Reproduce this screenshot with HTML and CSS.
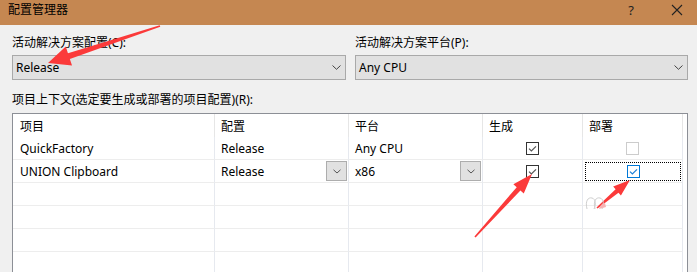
FILE: index.html
```html
<!DOCTYPE html>
<html lang="zh-CN">
<head>
<meta charset="utf-8">
<title>配置管理器</title>
<link rel="stylesheet" href="styles.css">
</head>
<body>
<div class="titlebar">
  <span class="title">配置管理器</span>
  <div class="tb-btns">
    <span class="help">?</span>
    <svg class="close" width="12" height="12" viewBox="0 0 12 12"><path d="M1 1 L11 11 M11 1 L1 11" stroke="#222" stroke-width="1.1" fill="none"/></svg>
  </div>
</div>
<div class="content">
  <div class="selectors">
    <div class="field">
      <div class="label">活动解决方案配置(C):</div>
      <div class="combo"><span>Release</span><svg class="chev" width="9" height="5" viewBox="0 0 9 5"><path d="M0.5 0.5 L4.5 4.3 L8.5 0.5" stroke="#444" stroke-width="1" fill="none"/></svg></div>
    </div>
    <div class="field">
      <div class="label">活动解决方案平台(P):</div>
      <div class="combo"><span>Any CPU</span><svg class="chev" width="9" height="5" viewBox="0 0 9 5"><path d="M0.5 0.5 L4.5 4.3 L8.5 0.5" stroke="#444" stroke-width="1" fill="none"/></svg></div>
    </div>
  </div>
  <div class="label ctx">项目上下文(选定要生成或部署的项目配置)(R):</div>
  <div class="grid">
    <div class="hc first">项目</div>
    <div class="hc">配置</div>
    <div class="hc">平台</div>
    <div class="hc">生成</div>
    <div class="hc">部署</div>
    <div class="hc end"></div>

    <div class="c first">QuickFactory</div>
    <div class="c">Release</div>
    <div class="c">Any CPU</div>
    <div class="c center"><svg class="cb" width="13" height="13" viewBox="0 0 13 13"><rect x="0.5" y="0.5" width="12" height="12" fill="#fff" stroke="#333"/><path d="M3 6.6 L5.4 9 L10 4.3" stroke="#555" stroke-width="1.2" fill="none"/></svg></div>
    <div class="c center"><svg class="cb" width="13" height="13" viewBox="0 0 13 13"><rect x="0.5" y="0.5" width="12" height="12" fill="#fff" stroke="#cccccc"/></svg></div>
    <div class="c end"></div>

    <div class="c first">UNION Clipboard</div>
    <div class="c combo-cell">Release<span class="cbtn"><svg width="8" height="5" viewBox="0 0 8 5"><path d="M0.5 0.8 L4 4 L7.5 0.8" stroke="#555" stroke-width="1" fill="none"/></svg></span></div>
    <div class="c combo-cell">x86<span class="cbtn"><svg width="8" height="5" viewBox="0 0 8 5"><path d="M0.5 0.8 L4 4 L7.5 0.8" stroke="#555" stroke-width="1" fill="none"/></svg></span></div>
    <div class="c center"><svg class="cb" width="13" height="13" viewBox="0 0 13 13"><rect x="0.5" y="0.5" width="12" height="12" fill="#fff" stroke="#333"/><path d="M3 6.6 L5.4 9 L10 4.3" stroke="#555" stroke-width="1.2" fill="none"/></svg></div>
    <div class="c center focus-cell"><span class="focus"><svg class="cb" width="13" height="13" viewBox="0 0 13 13"><rect x="0.5" y="0.5" width="12" height="12" fill="#fff" stroke="#0078d7"/><path d="M3 6.6 L5.4 9 L10 4.3" stroke="#1a7fd8" stroke-width="1.2" fill="none"/></svg></span></div>
    <div class="c end"></div>

    <div class="c first"></div><div class="c"></div><div class="c"></div><div class="c"></div><div class="c"></div><div class="c end"></div>
    <div class="c first"></div><div class="c"></div><div class="c"></div><div class="c"></div><div class="c"></div><div class="c end"></div>
    <div class="c first"></div><div class="c"></div><div class="c"></div><div class="c"></div><div class="c"></div><div class="c end"></div>
    <div class="c first"></div><div class="c"></div><div class="c"></div><div class="c"></div><div class="c"></div><div class="c end"></div>
    <div class="c first"></div><div class="c"></div><div class="c"></div><div class="c"></div><div class="c"></div><div class="c end"></div>
  </div>
</div>
<svg class="annot" width="697" height="272" viewBox="0 0 697 272">
  <polygon fill="#fb3a3a" points="159.75,25.24 67.95,53.25 65.75,46.60 48,63 72.03,65.60 69.83,58.95 160.25,26.76"/>
  <polygon fill="#fb3a3a" points="475.59,237.54 520.43,190.51 523.77,193.53 532,174 513.39,184.13 516.73,187.15 474.41,236.46"/>
  <polygon fill="#fb3a3a" points="597.52,208.61 618.46,192.68 620.92,195.58 630,180 613.16,186.43 615.62,189.32 596.48,207.39"/>
  <path d="M587 209 C585 201 588 197 592 198 C596 199 596 205 594 209 M595 209 C593 201 596 197 600 198 C604 199 604 205 602 209" stroke="#cfcfcf" stroke-width="1" fill="none"/>
  <path d="M599 209 C600 205 603 203 605 203 L606 207 Z" fill="#f6b3b3"/>
</svg>
</body>
</html>
```
FILE: styles.css
```css
html, body {
  margin: 0;
  padding: 0;
}
body {
  width: 697px;
  height: 272px;
  overflow: hidden;
  background: #f0f0f0;
  font-family: "Noto Sans", "Noto Sans CJK SC", sans-serif;
  font-size: 12px;
  color: #000;
  position: relative;
}
.titlebar {
  height: 25px;
  background: #c58751;
  display: flex;
  justify-content: space-between;
  align-items: flex-start;
  box-sizing: border-box;
  padding: 2px 0 0 8px;
}
.title {
  line-height: 16px;
  font-size: 12px;
}
.tb-btns {
  display: flex;
  align-items: center;
  height: 16px;
  padding-right: 14px;
}
.help {
  font-size: 13px;
  line-height: 16px;
  margin-right: 37px;
  color: #222;
}
.close {
  display: block;
}
.content {
  padding: 10px 0 0 12px;
}
.selectors {
  display: grid;
  grid-template-columns: 334px 333px;
  column-gap: 9px;
}
.label {
  line-height: 16px;
  white-space: nowrap;
}
.combo {
  margin-top: 4px;
  height: 25px;
  box-sizing: border-box;
  border: 1px solid #a9a9a9;
  background: #e1e1e1;
  display: flex;
  align-items: center;
  justify-content: space-between;
  padding: 0 4px 0 3px;
}
.combo span {
  line-height: 16px;
}
.chev {
  display: block;
}
.ctx {
  margin-top: 12px;
}
.grid {
  margin-top: 5px;
  width: 676px;
  box-sizing: border-box;
  border: 1px solid #8c8f96;
  border-bottom: none;
  background: #fff;
  display: grid;
  grid-template-columns: 202px 134px 134px 100px 100px 1fr;
  grid-auto-rows: 23px;
}
.hc {
  height: 24px;
  box-sizing: border-box;
  border-right: 1px solid #e6e6e6;
  padding-left: 6px;
  display: flex;
  align-items: center;
}
.c {
  box-sizing: border-box;
  border-right: 1px solid #e6e9ef;
  border-bottom: 1px solid #ededed;
  padding-left: 6px;
  display: flex;
  align-items: center;
  white-space: nowrap;
}
.first {
  padding-left: 7px;
}
.end {
  border-right: none;
  border-bottom: none;
  padding: 0;
}
.center {
  justify-content: center;
  padding-left: 0;
}
.cb {
  display: block;
}
.combo-cell {
  justify-content: space-between;
  padding-right: 1px;
}
.cbtn {
  width: 21px;
  height: 20px;
  box-sizing: border-box;
  border: 1px solid #adadad;
  background: #e1e1e1;
  display: flex;
  align-items: center;
  justify-content: center;
}
.focus-cell {
  padding: 2px 1px 1px 2px;
  align-items: stretch;
}
.focus {
  flex: 1;
  border: 1px dotted #000;
  display: flex;
  align-items: center;
  justify-content: center;
}
.annot {
  position: absolute;
  left: 0;
  top: 0;
  pointer-events: none;
}
```
